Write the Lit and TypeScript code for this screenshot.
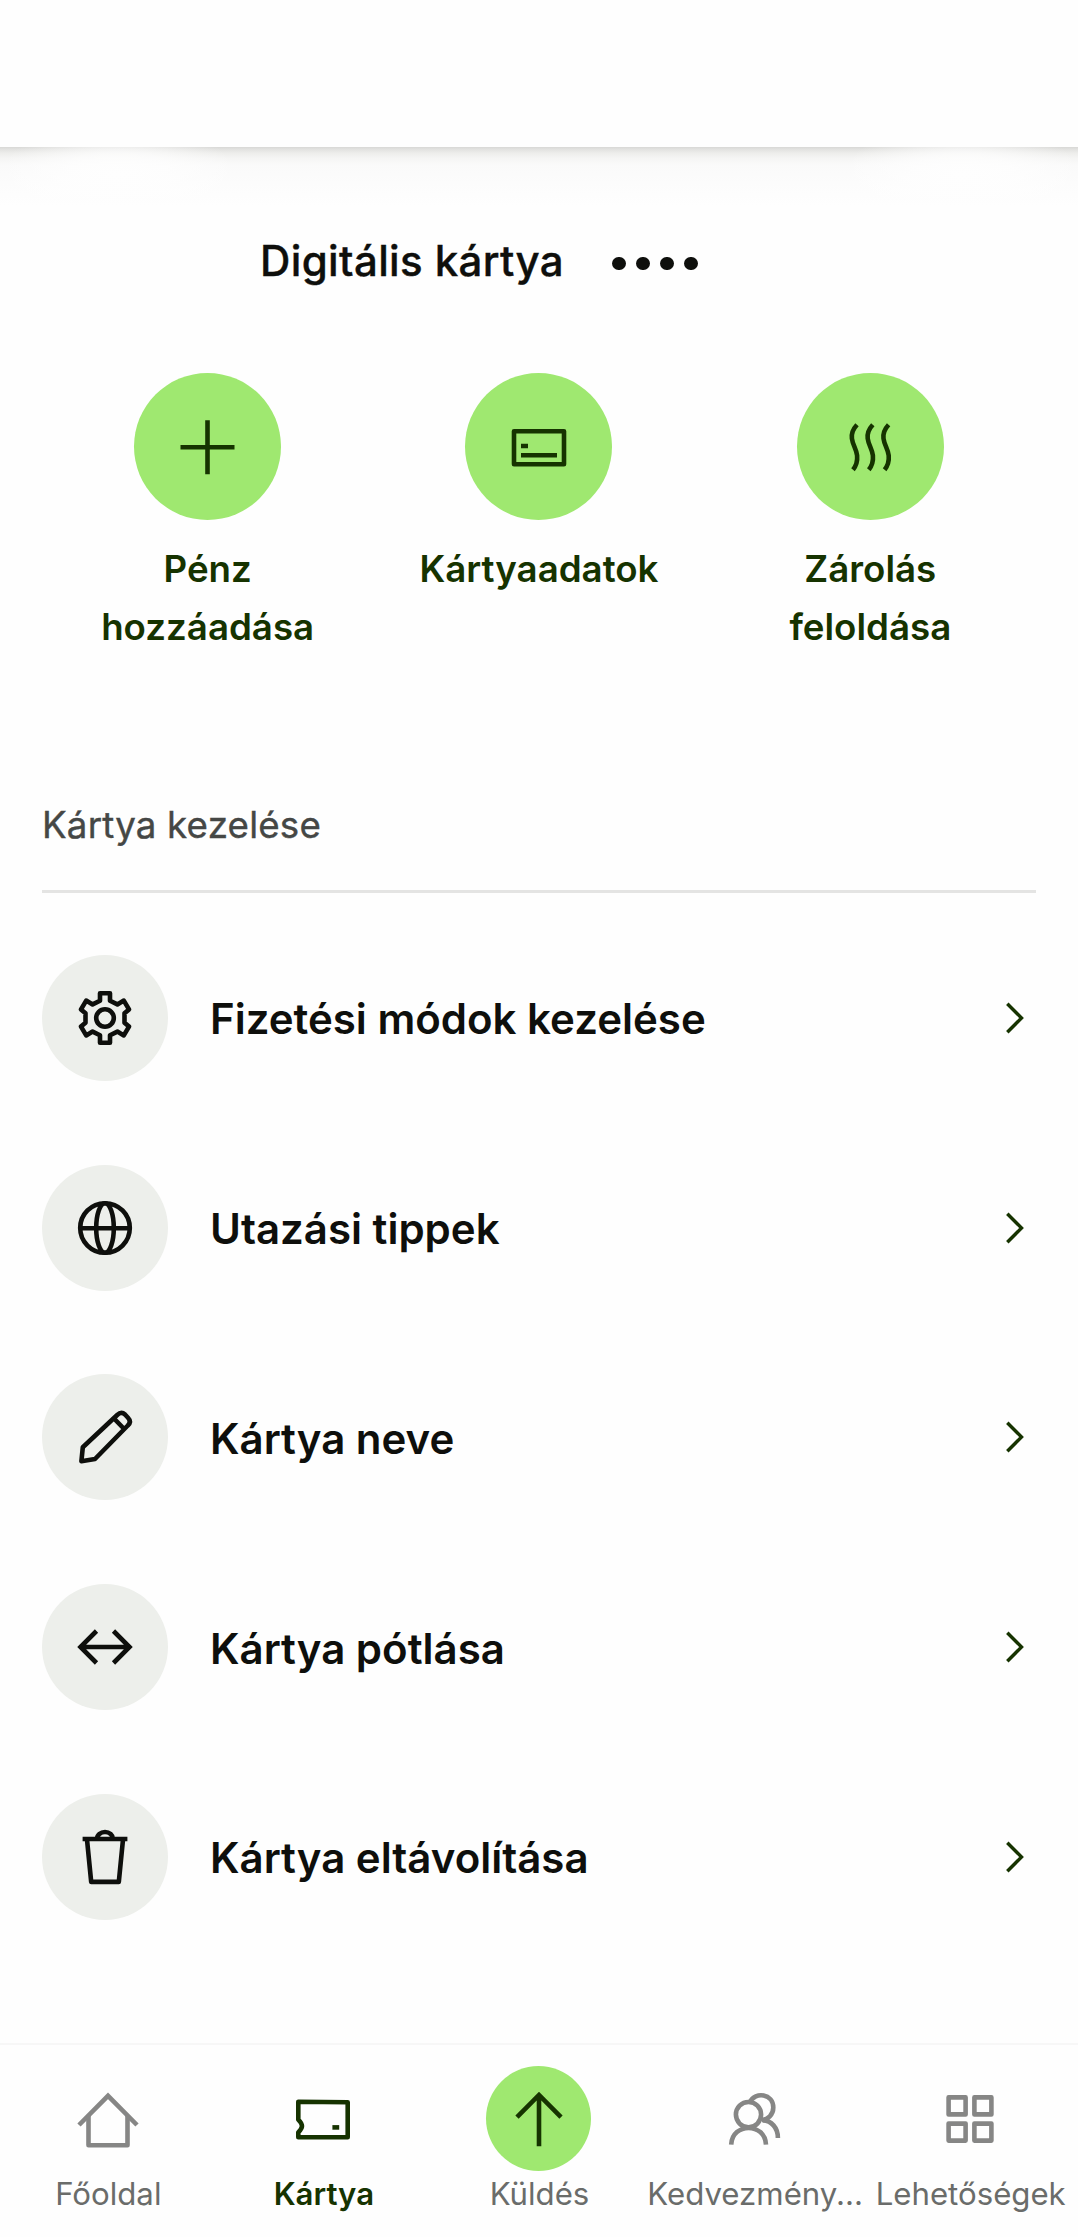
import { LitElement, html, css, svg } from "lit";
import { customElement } from "lit/decorators.js";

/* Icons are drawn on a 64-unit canvas whose origin is its centre. */
const icons = {
  plus: svg`<path d="M-27.500 .2H26.500M-.5-26.800V27.200"/>`,
  details: svg`<path stroke-linejoin="round" d="M-25-15.800H25V17.200H-25Z"/><path d="M-18-1h7M-18 8.200H18"/>`,
  heat: svg`${[0, 15.8, 31.6].map(
    (dx) =>
      svg`<path transform="translate(${dx} 0)" d="M-13-22.300C-17-18-18.700-13-18.100-8.500C-17.300-2-13.600 2-12.900 8.500C-12.500 13-13.600 18.500-17 22.700"/>`
  )}`,
  gear: svg`<circle r="8.800"/><path stroke-linejoin="round" d="M-5-24.700H5V-17.300L12.400-13.600L18.800-17.400L24-8.600L19.500-4.700V4.700L24 8.600L18.800 17.400L12.400 13.600L5 17.300V24.700H-5V17.300L-12.400 13.600L-18.800 17.400L-24 8.600L-19.500 4.700V-4.700L-24-8.600L-18.800-17.400L-12.400-13.600L-5-17.300Z"/>`,
  globe: svg`<circle r="24.800"/><ellipse rx="8.800" ry="24.800"/><path d="M-25 .2H25"/>`,
  pencil: svg`<path stroke-linejoin="round" d="M-23.600 24.200L-22.200 10.300L12.200-22Q16.300-26 20-22.500L23-19.300Q26.800-15.400 22.800-11.500L-10 22ZM9-18.500L19.200-8"/>`,
  swap: svg`<path d="M-25 0H25M-8.500-16L-24.500 0L-8.500 16M8.500-16L24.500 0L8.500 16"/>`,
  trash: svg`<path stroke-linejoin="round" d="M-18-17.500L-13.800 24.900H13.800L18-17.500"/><path d="M-22.400-18H22.400M-8-18A8 7 0 0 1 8-18"/>`,
  home: svg`<path d="M-29 6L0-23.200L29 6"/><path stroke-linejoin="round" d="M-19.500-3V26.200H19.500V-3"/>`,
  card: svg`<path stroke-linejoin="round" d="M-24.700-17.200L24.700-16.800V18.300H-24.700V13.400C-19.800 8.500-19.800 5.500-24.700 .6Z"/><path d="M9.400 8.400h6.800"/>`,
  send: svg`<path d="M0-24V27.300M-22-1.800L0-24L22-1.800"/>`,
  people: svg`<circle cx="-6.500" cy="-4.400" r="12.600"/><path d="M-23.800 25.600C-22.800 3.400 10 3.400 11 25.600M-5.200-16.900C.3-27.900 18.300-25.400 18.300-11.400C18.300-3.900 12.800 .4 6.800 1M7.800 1.400C16.300 1.600 22.900 8.600 22.900 18.900"/>`,
  grid: svg`<path stroke-linejoin="round" d="M-21.400-21.600h17v17h-17zM4.400-21.600h17v17h-17zM-21.400 4.600h17v17h-17zM4.400 4.600h17v17h-17z"/>`,
};

type IconName = keyof typeof icons;

const glyph = (name: IconName) =>
  html`<svg class="icon" viewBox="-32 -32 64 64" aria-hidden="true">${icons[name]}</svg>`;

const actions: { icon: IconName; label: string }[] = [
  { icon: "plus", label: "Pénz hozzáadása" },
  { icon: "details", label: "Kártyaadatok" },
  { icon: "heat", label: "Zárolás feloldása" },
];

const rows: { icon: IconName; label: string }[] = [
  { icon: "gear", label: "Fizetési módok kezelése" },
  { icon: "globe", label: "Utazási tippek" },
  { icon: "pencil", label: "Kártya neve" },
  { icon: "swap", label: "Kártya pótlása" },
  { icon: "trash", label: "Kártya eltávolítása" },
];

const tabs: { icon: IconName; label: string; kind?: string }[] = [
  { icon: "home", label: "Főoldal" },
  { icon: "card", label: "Kártya", kind: "active" },
  { icon: "send", label: "Küldés", kind: "send" },
  { icon: "people", label: "Kedvezmény..." },
  { icon: "grid", label: "Lehetőségek" },
];

@customElement("app-root")
export class AppRoot extends LitElement {
  static styles = css`
    :host {
      display: flex;
      flex-direction: column;
      height: 2237px;
      background: #fefefe;
      color: #0e0f0c;
      font-family: Inter, "Liberation Sans", sans-serif;
      overflow: hidden;
    }
    .icon {
      display: block;
      flex: none;
      width: 64px;
      height: 64px;
      fill: none;
      stroke: currentColor;
      stroke-width: 4.600;
    }
    .top {
      flex: none;
      height: 147px;
      background: #fefefe;
    }
    .shade {
      flex: none;
      height: 64px;
      background:
        radial-gradient(ellipse 120px 50px at 118px 28px, #fefefe 0, #fefefeb8 45%, #fefefe00),
        radial-gradient(ellipse 120px 50px at 962px 28px, #fefefe 0, #fefefeb8 45%, #fefefe00),
        linear-gradient(#d8d8d6 0, #e1e1df 2px, #ededeb 6px, #f5f5f4 11px, #fafafa 18px, #fcfcfc 36px, #fefefe 60px);
    }
    .title {
      display: flex;
      align-items: center;
      height: 98px;
      padding: 0 0 2px 260px;
      gap: 48px;
      font-size: 42px;
      font-weight: 500;
      letter-spacing: 0.38px;
      line-height: 63px;
      white-space: nowrap;
      -webkit-text-stroke: 0.4px currentColor;
    }
    .dots {
      display: flex;
      gap: 10.500px;
      padding-top: 7px;
    }
    .dot {
      width: 13.500px;
      height: 13.500px;
      border-radius: 50%;
      background: currentColor;
    }
    .actions {
      display: grid;
      grid-template-columns: repeat(3, 1fr);
      height: 423px;
      padding: 62px 42px 0;
      color: #163300;
    }
    .action {
      display: flex;
      flex-direction: column;
      align-items: center;
      gap: 20px;
    }
    .disc {
      display: grid;
      place-items: center;
      width: 147px;
      height: 147px;
      border-radius: 50%;
      background: #9fe870;
    }
    .action-label {
      width: 260px;
      font-size: 36.700px;
      font-weight: 600;
      line-height: 57.700px;
      text-align: center;
    }
    .section {
      margin: 0 42px;
      padding: 0 0 37px;
      border-bottom: 3px solid #e4e4e3;
      color: #454745;
      font-size: 36.700px;
      font-weight: 400;
      letter-spacing: 0.2px;
      line-height: 57px;
      -webkit-text-stroke: 0.4px currentColor;
    }
    .rows {
      padding: 20px 42px 0;
    }
    .row {
      display: flex;
      align-items: center;
      gap: 42px;
      height: 209.750px;
    }
    .badge {
      display: grid;
      place-items: center;
      width: 126px;
      height: 126px;
      border-radius: 50%;
      background: #edefeb;
    }
    .row-label {
      flex: 1;
      padding-top: 2px;
      font-size: 42px;
      font-weight: 600;
      line-height: 63px;
    }
    .chevron {
      width: 42px;
      height: 42px;
      fill: none;
      stroke: #163300;
      stroke-width: 3.400;
    }
    .nav {
      display: grid;
      grid-template-columns: repeat(5, 1fr);
      height: 194px;
      margin-top: auto;
      border-top: 2px solid #f7f7f7;
      box-sizing: border-box;
      background: #fefefe;
      color: #6a6c6a;
    }
    .tab {
      display: flex;
      flex-direction: column;
      align-items: center;
      min-width: 0;
      padding-top: 21px;
    }
    .tab-icon {
      display: grid;
      place-items: center;
      width: 105px;
      height: 105px;
      border-radius: 50%;
      color: #868685;
    }
    .tab-label {
      padding: 1px 0 0 1px;
      font-size: 31.200px;
      line-height: 44px;
      white-space: nowrap;
    }
    .active,
    .active .tab-icon,
    .send .tab-icon {
      color: #163300;
    }
    .active .tab-label {
      font-weight: 600;
    }
    .send .tab-icon {
      background: #9fe870;
    }
  `;

  render() {
    return html`
      <header class="top"></header>
      <div class="shade"></div>
      <div class="title">
        <span>Digitális kártya</span>
        <span class="dots">${[0, 1, 2, 3].map(() => html`<i class="dot"></i>`)}</span>
      </div>
      <section class="actions">
        ${actions.map(
          (a) => html`<div class="action">
            <div class="disc">${glyph(a.icon)}</div>
            <div class="action-label">${a.label}</div>
          </div>`
        )}
      </section>
      <div class="section">Kártya kezelése</div>
      <main class="rows">
        ${rows.map(
          (r) => html`<div class="row">
            <div class="badge">${glyph(r.icon)}</div>
            <div class="row-label">${r.label}</div>
            <svg class="chevron" viewBox="0 0 42 42"><path d="M13.300 6.700L27.500 21L13.300 35.300" /></svg>
          </div>`
        )}
      </main>
      <nav class="nav">
        ${tabs.map(
          (t) => html`<div class="tab ${t.kind ?? ""}">
            <div class="tab-icon">${glyph(t.icon)}</div>
            <div class="tab-label">${t.label}</div>
          </div>`
        )}
      </nav>
    `;
  }
}
